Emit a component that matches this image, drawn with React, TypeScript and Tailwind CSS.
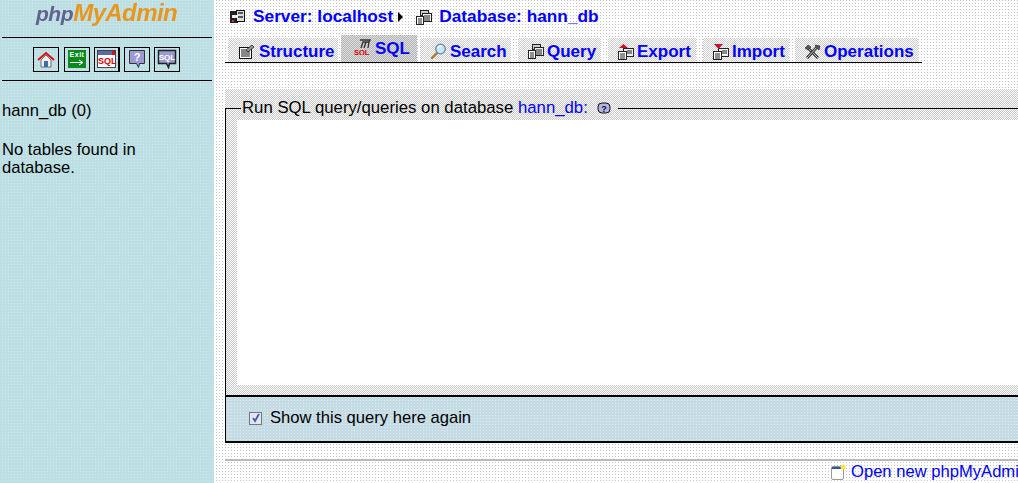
import React from "react";

const Server = () => (
  <svg width="17" height="16" viewBox="0 0 17 16" className="shrink-0">
    <rect x="1" y="2" width="8" height="12" fill="#222" />
    <rect x="7.500" y="1.500" width="8" height="11" fill="#ddd" stroke="#111" />
    <rect x="9" y="3" width="5" height="2" fill="#555" />
    <rect x="9" y="7" width="5" height="2" fill="#555" />
    <rect x="3" y="6" width="6" height="3" fill="#eee" />
    <rect x="3" y="11" width="2" height="2" fill="#c33" />
  </svg>
);

const Db = () => (
  <svg width="16" height="15" viewBox="0 0 16 15" className="shrink-0">
    <rect x="4.500" y="0.500" width="8" height="5" fill="#ccc" stroke="#222" />
    <rect x="6.500" y="3.500" width="9" height="8" fill="#eee" stroke="#222" />
    <rect x="0.500" y="6.500" width="7" height="8" fill="#fff" stroke="#222" />
    <path d="M2 9h4M2 11h4M2 13h4M8 6h6M8 8h6M8 10h6" stroke="#222" />
  </svg>
);

const Structure = () => (
  <svg width="16" height="15" viewBox="0 0 16 15" className="shrink-0">
    <rect x="0.500" y="3.500" width="12" height="11" fill="#fff" stroke="#111" />
    <path d="M2 6h5M2 8h9M2 10h9M2 12h9" stroke="#111" />
    <path d="M7 6l6-5 2 2-6 5z" fill="#999" stroke="#222" strokeWidth="0.800" />
  </svg>
);

const Sql = () => (
  <svg width="17" height="16" viewBox="0 0 17 16" className="shrink-0">
    <path d="M6 1h10l-1 2H9l-2 6M12 3l-2 6M15 3l-1 6" fill="none" stroke="#333" strokeWidth="1.300" />
    <text x="0" y="15.500" fontSize="7.500" fontWeight="700" fill="#d00" fontFamily="'Liberation Sans',sans-serif">SQL</text>
  </svg>
);

const Search = () => (
  <svg width="17" height="17" viewBox="0 0 17 17" className="shrink-0">
    <path d="M7 10l-5 5" stroke="#c0702a" strokeWidth="2.400" strokeLinecap="round" />
    <circle cx="10.500" cy="6" r="4.800" fill="#c9e6f7" stroke="#5f88a8" strokeWidth="1.300" />
    <path d="M8 5c1-2 3-2 4-1.500" stroke="#fff" strokeWidth="1.200" fill="none" />
  </svg>
);

const Export = ({ down }: { down?: boolean }) => (
  <svg width="16" height="16" viewBox="0 0 16 16" className="shrink-0">
    <rect x="5.500" y="4.500" width="10" height="8" fill="#eee" stroke="#222" />
    <rect x="0.500" y="7.500" width="8" height="8" fill="#fff" stroke="#222" />
    <path d="M2 10h5M2 12h5M2 14h5M9 7h5M9 9h5" stroke="#222" />
    <path d={down ? "M1 0h9L5.500 5z" : "M5.500 0L10 4H1z"} fill="#c8102e" />
  </svg>
);

const Tools = () => (
  <svg width="17" height="16" viewBox="0 0 17 16" className="shrink-0">
    <path d="M3 3l11 11" stroke="#333" strokeWidth="2.800" />
    <path d="M3 3l11 11" stroke="#ccc" strokeWidth="1" />
    <path d="M13 3L3 14" stroke="#333" strokeWidth="2.800" />
    <path d="M13 3L3 14" stroke="#ccc" strokeWidth="1" />
    <path d="M1 4l3-3 3 2-3 3zM11 1l5 1-1 4-2-2z" fill="#555" stroke="#222" strokeWidth="0.600" />
  </svg>
);

const tabClass =
  "flex items-center pt-[3px] font-bold text-[17px] text-[#0000ff] h-6 mt-[3px] bg-[conic-gradient(#ccc_25%,#fff_0_50%,#ccc_0_75%,#fff_0)] bg-[length:2px_2px]";

function NavButton({ children, className }: { children: React.ReactNode; className: string }) {
  return <div className={`flex h-[25px] w-[26px] items-center justify-center border border-black ${className}`}>{children}</div>;
}

export default function App() {
  return (
    <div className="flex h-[483px] w-[1018px] overflow-hidden font-['Liberation_Sans',Arial,sans-serif] text-black">
      <aside className="flex w-[214px] shrink-0 flex-col bg-[#bae0e4] bg-[conic-gradient(at_2px_1px,#e2e2ee_25%,#bae0e4_0)] bg-[length:3px_3px]">
        <div className="flex h-[37px] items-start justify-center pr-[1px]">
          <div className="mt-[-1px] flex items-baseline font-bold italic leading-[28px] blur-[0.5px]">
            <span className="text-[21px] tracking-[-0.4px] text-[#62628f]">php</span>
            <span className="text-[24px] tracking-[-0.6px] text-[#e8961e]">MyAdmin</span>
          </div>
        </div>
        <div className="mx-[2px] h-px bg-black" />
        <div className="flex h-[42px] items-center gap-[4px] pl-[33px]">
          <NavButton className="mr-[1px]">
            <svg width="18" height="17" viewBox="0 0 18 17">
              <path d="M1 9l8-7 8 7" fill="none" stroke="#d11" strokeWidth="2" />
              <path d="M4 9l5-5 5 5v7H4z" fill="#eee" stroke="#555" strokeWidth="0.800" />
              <rect x="7" y="10" width="4" height="6" fill="#3b6ea5" />
            </svg>
          </NavButton>
          <NavButton className="">
            <div className="flex h-[18px] w-[18px] flex-col items-center bg-[#0b8a1c] text-[7px] font-bold leading-[9px] text-white">
              <span className="tracking-[0.5px]">Exit</span>
              <svg width="16" height="7" viewBox="0 0 16 7">
                <path d="M1 3.500h12M10 1l4 2.500L10 6" fill="none" stroke="#fff" />
              </svg>
            </div>
          </NavButton>
          <NavButton className="border-r-2">
            <div className="flex h-[18px] w-[19px] flex-col border border-[#444] bg-white">
              <div className="flex h-[4px] justify-end bg-[#5a6aa5]">
                <div className="h-[4px] w-[3px] bg-[#d11]" />
              </div>
              <span className="text-center text-[9px] font-bold leading-[12px] text-[#d00]">SQL</span>
            </div>
          </NavButton>
          <NavButton className="">
            <svg width="18" height="20" viewBox="0 0 18 20">
              <path d="M1.500 1.500h15v13h-5l-1 4-2-4h-7z" fill="#9c9ad2" stroke="#333" />
              <text x="9" y="12" textAnchor="middle" fontSize="11" fontWeight="700" fill="#fff" fontFamily="'Liberation Sans',sans-serif">?</text>
            </svg>
          </NavButton>
          <NavButton className="">
            <svg width="20" height="20" viewBox="0 0 20 20">
              <path d="M1.500 1.500h17v13h-6l-1 4-2-4h-8z" fill="#9c9ad2" stroke="#222" strokeWidth="1.500" />
              <text x="10" y="11" textAnchor="middle" fontSize="8" fontWeight="700" fill="#fff" fontFamily="'Liberation Sans',sans-serif">SQL</text>
            </svg>
          </NavButton>
        </div>
        <div className="mx-[2px] h-px bg-black" />
        <div className="px-[2px] pt-[21px] text-[16.600px] leading-[18px]">
          <div>hann_db (0)</div>
          <div className="mt-[21px]">
            No tables found in
            <br />
            database.
          </div>
        </div>
      </aside>

      <main className="min-w-0 flex-1 pl-[11px] bg-[conic-gradient(at_2px_1px,#c4c4c4_25%,#fff_0)] bg-[length:3px_3px]">
        <div className="flex h-[35px] items-center pb-[1px] pl-[4px] text-[17.300px] font-bold text-[#0000ff]">
          <Server />
          <span className="ml-[7px]">Server: localhost</span>
          <span className="ml-[5px] mr-[13px] h-0 w-0 border-y-[5px] border-l-[5px] border-y-transparent border-l-black" />
          <Db />
          <span className="ml-[7px]">Database: hann_db</span>
        </div>
        <div className="flex h-[28px] w-[697px] items-start border-b border-black pl-[3px]">
          <div className={`${tabClass} w-[110px] pl-[11px]`}>
            <Structure />
            <span className="ml-[4px]">Structure</span>
          </div>
          <div className="ml-[3px] flex h-[27px] w-[76px] items-start bg-[conic-gradient(#b4b4b4_25%,#dedede_0_50%,#b4b4b4_0_75%,#dedede_0)] bg-[length:2px_2px] pl-[13px] pt-[4px] text-[17px] font-bold leading-[20px] text-[#0000ff]">
            <Sql />
            <span className="ml-[4px]">SQL</span>
          </div>
          <div className={`${tabClass} ml-[3px] w-[91px] pl-[10px]`}>
            <Search />
            <span className="ml-[3px]">Search</span>
          </div>
          <div className={`${tabClass} ml-[7px] w-[83px] pl-[10px]`}>
            <Db />
            <span className="ml-[3px]">Query</span>
          </div>
          <div className={`${tabClass} ml-[7px] w-[88px] pl-[10px]`}>
            <Export />
            <span className="ml-[3px]">Export</span>
          </div>
          <div className={`${tabClass} ml-[7px] w-[86px] pl-[10px]`}>
            <Export down />
            <span className="ml-[3px]">Import</span>
          </div>
          <div className={`${tabClass} ml-[6px] w-[123px] pl-[9px]`}>
            <Tools />
            <span className="ml-[3px]">Operations</span>
          </div>
        </div>

        <div className="mt-[26px] w-[1000px]">
          <div className="bg-[conic-gradient(#c8c8c8_25%,#fff_0_50%,#c8c8c8_0_75%,#fff_0)] bg-[length:2px_2px] pt-[9px]">
            <fieldset className="h-[297px] border-l border-t border-black pb-[11px] pl-[11px] pt-[2px]">
              <legend className="ml-[4px] flex h-[20px] items-center px-px text-[16.750px] leading-[20px]">
                <span>Run SQL query/queries on database&nbsp;</span>
                <span className="text-[#0000ff]">hann_db</span>
                <span className="text-[#0000ff]">:</span>
                <svg width="14" height="12" viewBox="0 0 14 12" className="ml-[9px] mr-[6px]">
                  <rect x="1" y="1" width="12" height="10" rx="4" fill="#b5b3e6" stroke="#111" />
                  <text x="7" y="9.500" textAnchor="middle" fontSize="9" fontWeight="700" fill="#111" fontFamily="'Liberation Sans',sans-serif">?</text>
                </svg>
              </legend>
              <div className="h-[265px] bg-white" />
            </fieldset>
          </div>
          <div className="flex h-[48px] items-center border-y-2 border-l border-black bg-[#c4dde5] bg-[conic-gradient(at_2px_1px,#e8e8f2_25%,#c4dde5_0)] bg-[length:3px_3px] pb-[2px] pl-[23px] text-[16.600px]">
            <span className="flex h-[13px] w-[13px] items-center justify-center border border-[#777] bg-[#e2e6f0]">
              <svg width="10" height="10" viewBox="0 0 10 10">
                <path d="M2 5l2 3 4-7" fill="none" stroke="#3f5fa8" strokeWidth="1.800" />
              </svg>
            </span>
            <span className="ml-[8px]">Show this query here again</span>
          </div>
        </div>

        <div className="mt-[16px] h-[2px] w-[1000px] bg-[#b8b8b8]" />
        <div className="flex w-[793px] items-center overflow-hidden whitespace-nowrap pl-[605px] pt-[1px] text-[16.600px] leading-[20px]">
          <svg width="16" height="17" viewBox="0 0 16 17" className="shrink-0">
            <rect x="1.500" y="2.500" width="12" height="13" rx="1.500" fill="#fff" stroke="#999" />
            <rect x="2" y="3" width="9" height="2" fill="#2c5a9a" />
            <circle cx="13" cy="3" r="2.500" fill="#f5e642" />
          </svg>
          <span className="ml-[5px] text-[#0000ff]">Open new phpMyAdmin window</span>
        </div>
      </main>
    </div>
  );
}
